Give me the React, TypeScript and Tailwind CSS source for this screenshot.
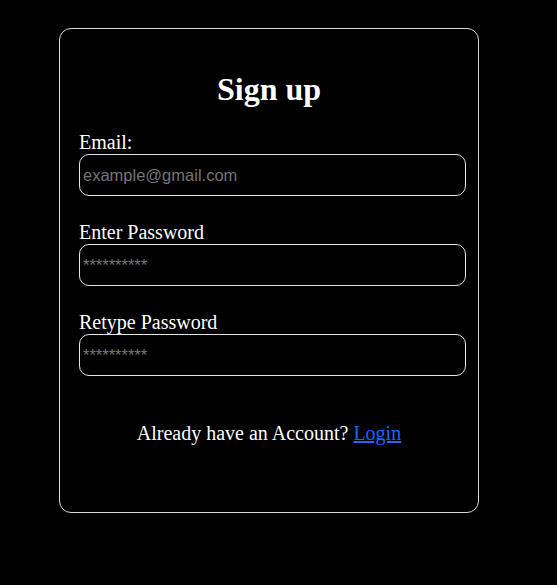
export default function App() {
  return (
    <div className="min-h-[585px] bg-black pt-[28px] pl-[59px] font-['Liberation_Serif',serif] text-white">
      <div className="w-[420px] h-[485px] rounded-[12px] border border-[#d9d9d9]">
        <h1 className="mt-[42px] text-center text-[32px] font-bold leading-[37px]">Sign up</h1>

        <form className="mt-[24px] pl-[19px] flex flex-col">
          <label className="text-[20px] leading-[21px]">Email:</label>
          <input
            type="email"
            placeholder="example@gmail.com"
            className="mt-[1px] h-[42px] w-[387px] rounded-[10px] border border-[#e5e5e5] bg-black px-[3px] font-['Liberation_Sans',sans-serif] text-[16.5px] text-white outline-none placeholder:text-[#757575]"
          />

          <label className="mt-[26px] text-[20px] leading-[21px]">Enter Password</label>
          <input
            type="password"
            placeholder="**********"
            className="mt-[1px] h-[42px] w-[387px] rounded-[10px] border border-[#e5e5e5] bg-black px-[3px] font-['Liberation_Sans',sans-serif] text-[16.5px] text-white outline-none placeholder:text-[#757575]"
          />

          <label className="mt-[26px] text-[20px] leading-[21px]">Retype Password</label>
          <input
            type="password"
            placeholder="**********"
            className="mt-[1px] h-[42px] w-[387px] rounded-[10px] border border-[#e5e5e5] bg-black px-[3px] font-['Liberation_Sans',sans-serif] text-[16.5px] text-white outline-none placeholder:text-[#757575]"
          />
        </form>

        <p className="mt-[46px] text-center text-[20px] leading-[23px]">
          Already have an Account?{" "}
          <a href="#" className="text-[#1a66ff] underline">
            Login
          </a>
        </p>
      </div>
    </div>
  );
}
